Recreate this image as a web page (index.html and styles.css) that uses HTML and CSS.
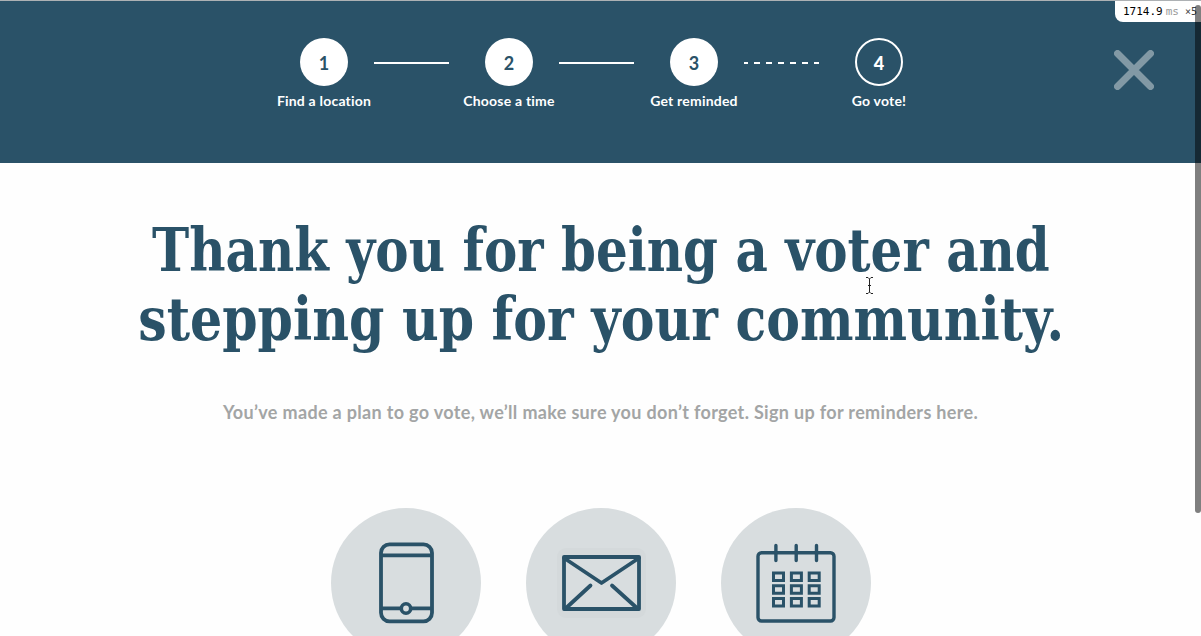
FILE: index.html
```html
<!DOCTYPE html>
<html lang="en">
<head>
<meta charset="utf-8">
<title>Go vote</title>
<link rel="stylesheet" href="styles.css">
</head>
<body>
<header class="header">
  <ol class="steps">
    <li class="step"><span class="step-number">1</span><span class="step-label">Find a location</span></li>
    <li class="line"></li>
    <li class="step"><span class="step-number">2</span><span class="step-label">Choose a time</span></li>
    <li class="line"></li>
    <li class="step"><span class="step-number">3</span><span class="step-label">Get reminded</span></li>
    <li class="line line-dashed"></li>
    <li class="step"><span class="step-number step-number-open">4</span><span class="step-label">Go vote!</span></li>
  </ol>
  <svg class="close" width="40" height="40" viewBox="0 0 40 40"><path d="M3.500 3.500 36.500 36.500M36.500 3.500 3.500 36.500" fill="none" stroke="#8299a5" stroke-width="7" stroke-linecap="round"/></svg>
</header>
<main class="main">
  <h1 class="title"><span class="title-line title-first">Thank you for being a voter and</span><span class="title-line title-second">stepping up for your community.</span></h1>
  <p class="intro">You’ve made a plan to go vote, we’ll make sure you don’t forget. Sign up for reminders here.</p>
  <div class="options">
    <div class="option">
      <svg width="150" height="150" viewBox="0 0 150 150" fill="none" stroke="#2a5268" stroke-width="3.8">
        <rect x="50" y="36.300" width="51" height="77" rx="8.500"/>
        <path d="M50 47.300H101M50 100.300H69M81 100.300H101"/>
        <circle cx="75" cy="100.500" r="4.700" stroke-width="3.600"/>
      </svg>
    </div>
    <div class="option">
      <svg width="150" height="150" viewBox="0 0 150 150" fill="none" stroke="#2a5268" stroke-width="3.8" stroke-linecap="round" stroke-linejoin="round">
        <rect x="31" y="40" width="89" height="70" rx="9" fill="#d4d9db" stroke="none"/>
        <rect x="38" y="49" width="75" height="52" fill="#d8dddf"/>
        <path d="M38 50 75.500 75 113 50M39 101 64.500 77.500M112 101 86 77.500"/>
      </svg>
    </div>
    <div class="option">
      <svg width="150" height="150" viewBox="0 0 150 150" fill="none" stroke="#2a5268" stroke-width="3.400">
        <rect x="37" y="44.700" width="76" height="68.300" rx="3.500"/>
        <path d="M54.900 37.500V52.500M75.200 37.500V52.500M95.500 37.500V52.500" stroke-linecap="round"/>
        <g stroke-width="3">
          <path d="M52.500 65h10v7.500h-10zM70.400 65h10v7.500h-10zM88.200 65h10v7.500h-10z"/>
          <path d="M52.500 77.800h10v7.500h-10zM70.400 77.800h10v7.500h-10zM88.200 77.800h10v7.500h-10z"/>
          <path d="M52.500 90.500h10v7.500h-10zM70.400 90.500h10v7.500h-10zM88.200 90.500h10v7.500h-10z"/>
        </g>
      </svg>
    </div>
  </div>
</main>
<div class="timer"><span>1714.9</span><span class="unit">ms</span><span class="count">×5</span></div>
<div class="scroll-thumb"></div>
<svg class="cursor" width="9" height="17" viewBox="0 0 9 17" fill="none" stroke="#222"><path d="M1 .5H3L4.500 2 6 .5H8M4.500 2V15M1 16.500H3L4.500 15 6 16.500H8M3 8.500H6"/></svg>
</body>
</html>
```
FILE: styles.css
```css
* { box-sizing: border-box; }
body {
  margin: 0;
  height: 636px;
  overflow: hidden;
  position: relative;
  background: #fefefe;
  font-family: Lato, sans-serif;
  color: #2a5268;
}
.header {
  position: relative;
  height: 163px;
  padding-top: 37px;
  border-top: 1px solid #adb1b4;
  background: #2a5268;
}
.steps {
  display: flex;
  width: 655px;
  margin: 0 0 0 274px;
  padding: 0;
  list-style: none;
}
.step {
  display: flex;
  flex: none;
  flex-direction: column;
  align-items: center;
  width: 100px;
}
.step-number {
  display: flex;
  align-items: center;
  justify-content: center;
  width: 48px;
  height: 48px;
  padding-top: 1px;
  border-radius: 50%;
  background: #fff;
  font-size: 18px;
  font-weight: 700;
}
.step-number-open {
  border: 2px solid #fff;
  background: none;
  color: #fff;
  font-weight: 900;
}
.step-label {
  margin-top: 6px;
  color: #fff;
  font-size: 14px;
  font-weight: 700;
  letter-spacing: .2px;
  line-height: 18px;
  white-space: nowrap;
}
.line {
  flex: none;
  width: 75px;
  height: 2px;
  margin: 24px 10px 0 0;
  background: #fff;
}
.line-dashed {
  background: repeating-linear-gradient(90deg, #fff 0 6px, transparent 6px 12px) -2px 0 / 77px 2px;
}
.close { position: absolute; left: 1114px; top: 49px; }
.main { text-align: center; }
.title {
  display: flex;
  flex-direction: column;
  align-items: center;
  margin: 0;
  padding-top: 53px;
  font: 700 59px/69px "DejaVu Serif", serif;
}
.title-line { display: block; white-space: nowrap; }
.title-first { transform: scaleX(.847); }
.title-second { transform: translateX(1px) scaleX(.857); }
.intro {
  margin: 46px 0 0;
  color: #a3a5a5;
  font-size: 18px;
  font-weight: 700;
  letter-spacing: .33px;
  line-height: 24px;
  white-space: nowrap;
}
.options {
  display: flex;
  justify-content: center;
  gap: 45px;
  margin-top: 84px;
}
.option {
  flex: none;
  width: 150px;
  height: 150px;
  border-radius: 50%;
  background: #d8dddf;
}
.option svg { display: block; }
.timer {
  position: absolute;
  top: 1px;
  right: 0;
  display: flex;
  align-items: center;
  width: 86px;
  height: 21px;
  padding-left: 8px;
  border-bottom-left-radius: 8px;
  background: #fff;
  color: #000;
  font: 11px "DejaVu Sans Mono", monospace;
}
.unit { margin-left: 3px; color: #999; }
.count { margin-left: 6px; color: #444; font-size: 10px; }
.scroll-thumb {
  position: absolute;
  top: 5px;
  right: 0;
  width: 6px;
  height: 508px;
  border-radius: 3px;
  background: rgba(0, 0, 0, .5);
}
.cursor { position: absolute; left: 865px; top: 277px; }
```
